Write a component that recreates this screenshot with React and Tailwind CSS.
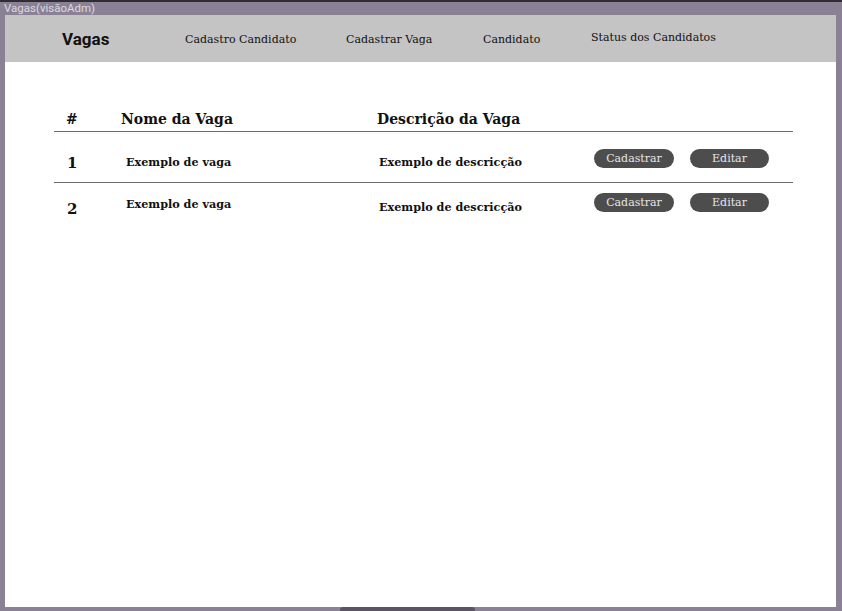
import React from "react";

const serif = { fontFamily: '"DejaVu Serif", "Liberation Serif", serif' };

const vagas = [
  { id: 1, nome: "Exemplo de vaga", descricao: "Exemplo de descricção" },
  { id: 2, nome: "Exemplo de vaga", descricao: "Exemplo de descricção" },
];

const NavLink = ({ children, className = "" }) => (
  <span className={`shrink-0 text-[11px] text-[#111] ${className}`} style={serif}>
    {children}
  </span>
);

const Pill = ({ children, className = "" }) => (
  <button
    className={`h-[19px] rounded-full bg-[#4d4d4d] text-[11px] leading-none text-[#e6e6e6] ${className}`}
    style={serif}
  >
    {children}
  </button>
);

export default function App() {
  return (
    <div className="relative flex h-[611px] w-[842px] flex-col overflow-hidden bg-[#8a8294]">
      {/* window title */}
      <div className="h-[2px] bg-[#2f2d33]" />
      <div
        className="flex h-[13px] items-center pl-[4px] text-[11.5px] leading-none text-[#dcd8e2]"
        style={{ fontFamily: 'Roboto, "Liberation Sans", sans-serif' }}
      >
        Vagas(visãoAdm)
      </div>

      <div className="ml-[5px] mr-[6px] flex flex-1 flex-col bg-white">
        {/* nav */}
        <nav className="flex h-[47px] shrink-0 items-center bg-[#c4c4c4] pl-[57px]">
          <span
            className="w-[123px] shrink-0 pt-[3px] text-[17px] font-bold text-[#111]"
            style={{ fontFamily: 'Roboto, "Liberation Sans", sans-serif' }}
          >
            Vagas
          </span>
          <NavLink className="w-[161px] pt-[4px]">Cadastro Candidato</NavLink>
          <NavLink className="w-[137px] pt-[4px]">Cadastrar Vaga</NavLink>
          <NavLink className="w-[108px] pt-[4px]">Candidato</NavLink>
          <NavLink>Status dos Candidatos</NavLink>
        </nav>

        {/* table */}
        <div className="ml-[49px] mt-[38px] w-[739px]">
          <div className="flex h-[31px] items-end pb-[1px] text-[14px] font-bold text-[#111]" style={serif}>
            <span className="ml-[12px] w-[55px]">#</span>
            <span className="w-[256px]">Nome da Vaga</span>
            <span>Descrição da Vaga</span>
          </div>
          <div className="h-px bg-[#6a6a6a]" />

          {vagas.map((v, i) => (
            <React.Fragment key={v.id}>
              <div className="flex h-[50px] items-start text-[#111]" style={serif}>
                <span className={`ml-[13px] w-[59px] text-[15px] font-bold ${i === 0 ? "pt-[20px]" : "pt-[15px]"}`}>
                  {v.id}
                </span>
                <span className={`w-[253px] text-[11.2px] font-bold ${i === 0 ? "pt-[22px]" : "pt-[13px]"}`}>
                  {v.nome}
                </span>
                <span className={`w-[215px] text-[11.2px] font-bold ${i === 0 ? "pt-[22px]" : "pt-[16px]"}`}>
                  {v.descricao}
                </span>
                <div className={`flex gap-[16px] ${i === 0 ? "pt-[17px]" : "pt-[10px]"}`}>
                  <Pill className="w-[80px]">Cadastrar</Pill>
                  <Pill className="w-[79px]">Editar</Pill>
                </div>
              </div>
              {i === 0 && <div className="h-px bg-[#6a6a6a]" />}
            </React.Fragment>
          ))}
        </div>
      </div>
      <div className="h-[4px] shrink-0" />

      {/* bottom tab */}
      <div className="absolute bottom-0 left-[340px] h-[4px] w-[135px] rounded-t-[3px] bg-[#5b5563]" />
    </div>
  );
}
